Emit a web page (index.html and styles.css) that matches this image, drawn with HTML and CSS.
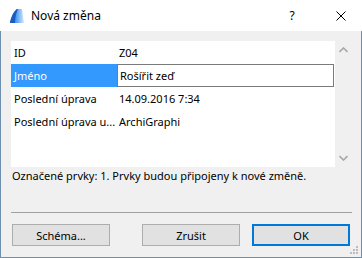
FILE: index.html
```html
<!DOCTYPE html>
<html lang="cs">
<head>
    <meta charset="UTF-8">
    <title>Nová změna</title>
    <link rel="stylesheet" href="styles.css">
</head>
<body>
    <div class="window">
        <div class="titlebar">
            <svg class="app-icon" width="16" height="16" viewBox="0 0 16 16">
                <defs>
                    <linearGradient id="sail" x1="0" y1="0" x2="1" y2="0">
                        <stop offset="0" stop-color="#1c64c8"/>
                        <stop offset="0.45" stop-color="#4f9cf0"/>
                        <stop offset="1" stop-color="#d6e9fb"/>
                    </linearGradient>
                </defs>
                <path d="M1 15 C2 9 5 3 8 1 L13 1 L15 15 Z" fill="url(#sail)"/>
                <path d="M1 15 C2 9 5 3 8 1 L9 1 C7 5 6 10 6 15 Z" fill="#1a5cc0"/>
            </svg>
            <span class="title">Nová změna</span>
            <span class="help">?</span>
            <svg class="close" width="10" height="10" viewBox="0 0 10 10">
                <path d="M0.5 0.5 L9.5 9.5 M9.5 0.5 L0.5 9.5" stroke="#000" stroke-width="1"/>
            </svg>
        </div>

        <div class="content">
            <div class="list">
                <div class="rows">
                    <div class="row">
                        <div class="label">ID</div>
                        <div class="value">Z04</div>
                    </div>
                    <div class="row selected">
                        <div class="label">Jméno</div>
                        <div class="value edit">Rošířit zeď</div>
                    </div>
                    <div class="row">
                        <div class="label">Poslední úprava</div>
                        <div class="value">14.09.2016 7:34</div>
                    </div>
                    <div class="row">
                        <div class="label">Poslední úprava u...</div>
                        <div class="value">ArchiGraphi</div>
                    </div>
                </div>
                <div class="scrollbar">
                    <svg width="9" height="6" viewBox="0 0 9 6"><path d="M0.5 5 L4.5 1 L8.5 5" fill="none" stroke="#a8a8a8" stroke-width="1.6"/></svg>
                    <svg width="9" height="6" viewBox="0 0 9 6"><path d="M0.5 1 L4.5 5 L8.5 1" fill="none" stroke="#a8a8a8" stroke-width="1.6"/></svg>
                </div>
            </div>

            <p class="status">Označené prvky: 1. Prvky budou připojeny k nové změně.</p>

            <div class="separator"></div>

            <div class="buttons">
                <button class="btn">Schéma...</button>
                <button class="btn btn-cancel">Zrušit</button>
                <button class="btn btn-default">OK</button>
            </div>
        </div>

        <svg class="grip" width="9" height="9" viewBox="0 0 9 9">
            <rect x="6" y="0" width="2" height="2" fill="#bcbcbc"/>
            <rect x="3" y="3" width="2" height="2" fill="#bcbcbc"/>
            <rect x="6" y="3" width="2" height="2" fill="#bcbcbc"/>
            <rect x="0" y="6" width="2" height="2" fill="#bcbcbc"/>
            <rect x="3" y="6" width="2" height="2" fill="#bcbcbc"/>
            <rect x="6" y="6" width="2" height="2" fill="#bcbcbc"/>
        </svg>
    </div>
</body>
</html>
```

FILE: styles.css
```css
body {
    margin: 0;
    font-family: "Noto Sans", "Open Sans", sans-serif;
    font-size: 11px;
    color: #000;
}

.window {
    position: relative;
    width: 362px;
    height: 258px;
    box-sizing: border-box;
    border: 1px solid #6f8fae;
    border-top: none;
    background-color: #f0f0f0;
    display: flex;
    flex-direction: column;
}

.titlebar {
    height: 31px;
    flex-shrink: 0;
    background-color: #fff;
    display: flex;
    align-items: center;
    padding-left: 9px;
    margin: 0 -1px;
    font-size: 12px;
}

.app-icon {
    margin-right: 6px;
}

.title {
    flex: 1;
}

.help {
    width: 14px;
    margin-right: 37px;
    text-align: center;
}

.close {
    margin-right: 16px;
}

.content {
    flex: 1;
    display: flex;
    flex-direction: column;
    padding: 10px 9px 0 10px;
}

.list {
    display: flex;
    height: 126px;
}

.rows {
    flex: 1;
    background-color: #fff;
}

.row {
    display: flex;
    height: 23px;
    align-items: center;
}

.label {
    width: 106px;
    flex-shrink: 0;
    padding-left: 3px;
    box-sizing: border-box;
    white-space: nowrap;
    overflow: hidden;
}

.value {
    flex: 1;
    padding-left: 2px;
}

.selected .label {
    align-self: stretch;
    display: flex;
    align-items: center;
    background-color: #3399ff;
    color: #fff;
}

.edit {
    align-self: stretch;
    display: flex;
    align-items: center;
    border: 1px solid #7a7a7a;
    margin-right: 1px;
}

.scrollbar {
    width: 17px;
    display: flex;
    flex-direction: column;
    justify-content: space-between;
    align-items: center;
    padding: 6px 0 6px;
}

.status {
    margin: 0;
    height: 17px;
    line-height: 17px;
    padding-left: 1px;
}

.separator {
    height: 1px;
    background-color: #a0a0a0;
    margin-top: 28px;
}

.buttons {
    display: flex;
    margin-top: 11px;
    padding-left: 1px;
}

.btn {
    width: 98px;
    height: 22px;
    font-family: inherit;
    font-size: 11px;
    background-color: #e1e1e1;
    border: 1px solid #adadad;
    padding: 0;
}

.btn-cancel {
    margin-left: 32px;
}

.btn-default {
    margin-left: 12px;
    border: 2px solid #0078d7;
}

.grip {
    position: absolute;
    right: 2px;
    bottom: 2px;
}
```
